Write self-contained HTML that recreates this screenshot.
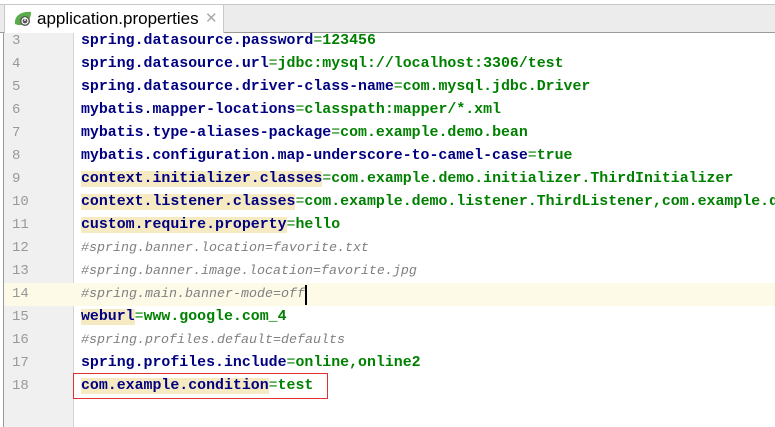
<!DOCTYPE html>
<html><head><style>
body{margin:0;width:775px;height:427px;overflow:hidden;background:#fff;position:relative;font-family:"Liberation Mono",monospace}
.tabbar{position:absolute;left:0;width:775px;background:#ececec;border-top:1px solid #c8c8c8;box-sizing:border-box;border-bottom:1px solid #9a9a9a;top:4px;height:29px}
.tab{position:absolute;left:4px;top:0;width:218px;height:28px;background:#fff;border-left:1px solid #c8c8c8;border-right:1px solid #c8c8c8;font-family:"Liberation Sans",sans-serif;font-size:17px;color:#000}
.tab span{position:absolute;left:32px;top:4px}
.tab .x{left:200px;top:4px;color:#aaa;font-size:15px}
.gut{position:absolute;left:3px;top:33px;width:69px;height:394px;background:#f0f0f0;border-left:1px solid #999;border-right:1px solid #d4d4d4}
.ln{position:absolute;left:0;width:775px;height:23px;line-height:23px;font-size:14.9px}
.n{position:absolute;left:12px;color:#999;font-size:14px;font-weight:normal}
.c{position:absolute;left:81px;white-space:pre;font-weight:bold}
.k{color:#000080}.v{color:#008000}.e{color:#008000;font-weight:normal}
.cm{color:#808080;font-style:italic;font-weight:normal;font-size:13.33px}
.h{background:#f5eac2}
</style></head><body>
<div class="tabbar"><div class="tab">
<svg style="position:absolute;left:8px;top:5px" width="20" height="18" viewBox="0 0 20 18"><path d="M2 14 C1 6 8 1 18 2 C18 10 13 16 5 15 Z" fill="#5aab4a"/><circle cx="12" cy="11" r="5" fill="#555"/><circle cx="12" cy="11" r="3" fill="none" stroke="#fff" stroke-width="1.2"/><path d="M12 7v4" stroke="#fff" stroke-width="1.2"/></svg>
<span>application.properties</span><span class="x">✕</span></div></div>
<div class="gut"></div>
<div style="position:absolute;left:4px;top:283px;width:771px;height:23px;background:#fdfae8"></div>
<div class="ln" style="top:30px"><span class="n">3</span><span class="c"><span class="k">spring.datasource.password</span><span class="e">=</span><span class="v">123456</span></span></div>
<div class="ln" style="top:53px"><span class="n">4</span><span class="c"><span class="k">spring.datasource.url</span><span class="e">=</span><span class="v">jdbc:mysql://localhost:3306/test</span></span></div>
<div class="ln" style="top:76px"><span class="n">5</span><span class="c"><span class="k">spring.datasource.driver-class-name</span><span class="e">=</span><span class="v">com.mysql.jdbc.Driver</span></span></div>
<div class="ln" style="top:99px"><span class="n">6</span><span class="c"><span class="k">mybatis.mapper-locations</span><span class="e">=</span><span class="v">classpath:mapper/*.xml</span></span></div>
<div class="ln" style="top:122px"><span class="n">7</span><span class="c"><span class="k">mybatis.type-aliases-package</span><span class="e">=</span><span class="v">com.example.demo.bean</span></span></div>
<div class="ln" style="top:145px"><span class="n">8</span><span class="c"><span class="k">mybatis.configuration.map-underscore-to-camel-case</span><span class="e">=</span><span class="v">true</span></span></div>
<div class="ln" style="top:168px"><span class="n">9</span><span class="c"><span class="k h">context.initializer.classes</span><span class="e">=</span><span class="v">com.example.demo.initializer.ThirdInitializer</span></span></div>
<div class="ln" style="top:191px"><span class="n">10</span><span class="c"><span class="k h">context.listener.classes</span><span class="e">=</span><span class="v">com.example.demo.listener.ThirdListener,com.example.demo</span></span></div>
<div class="ln" style="top:214px"><span class="n">11</span><span class="c"><span class="k h">custom.require.property</span><span class="e">=</span><span class="v">hello</span></span></div>
<div class="ln" style="top:237px"><span class="n">12</span><span class="c cm">#spring.banner.location=favorite.txt</span></div>
<div class="ln" style="top:260px"><span class="n">13</span><span class="c cm">#spring.banner.image.location=favorite.jpg</span></div>
<div class="ln" style="top:283px"><span class="n">14</span><span class="c cm">#spring.main.banner-mode=off</span><span style="position:absolute;left:305px;top:2px;width:2px;height:20px;background:#000"></span></div>
<div class="ln" style="top:306px"><span class="n">15</span><span class="c"><span class="k h">weburl</span><span class="e">=</span><span class="v">www.google.com_4</span></span></div>
<div class="ln" style="top:329px"><span class="n">16</span><span class="c cm">#spring.profiles.default=defaults</span></div>
<div class="ln" style="top:352px"><span class="n">17</span><span class="c"><span class="k">spring.profiles.include</span><span class="e">=</span><span class="v">online,online2</span></span></div>
<div class="ln" style="top:375px"><span class="n">18</span><span class="c"><span class="k h">com.example.condition</span><span class="e">=</span><span class="v">test</span></span></div>
<div style="position:absolute;left:73px;top:373px;width:255px;height:26px;border:1px solid #e03030;box-sizing:border-box"></div>
</body></html>
